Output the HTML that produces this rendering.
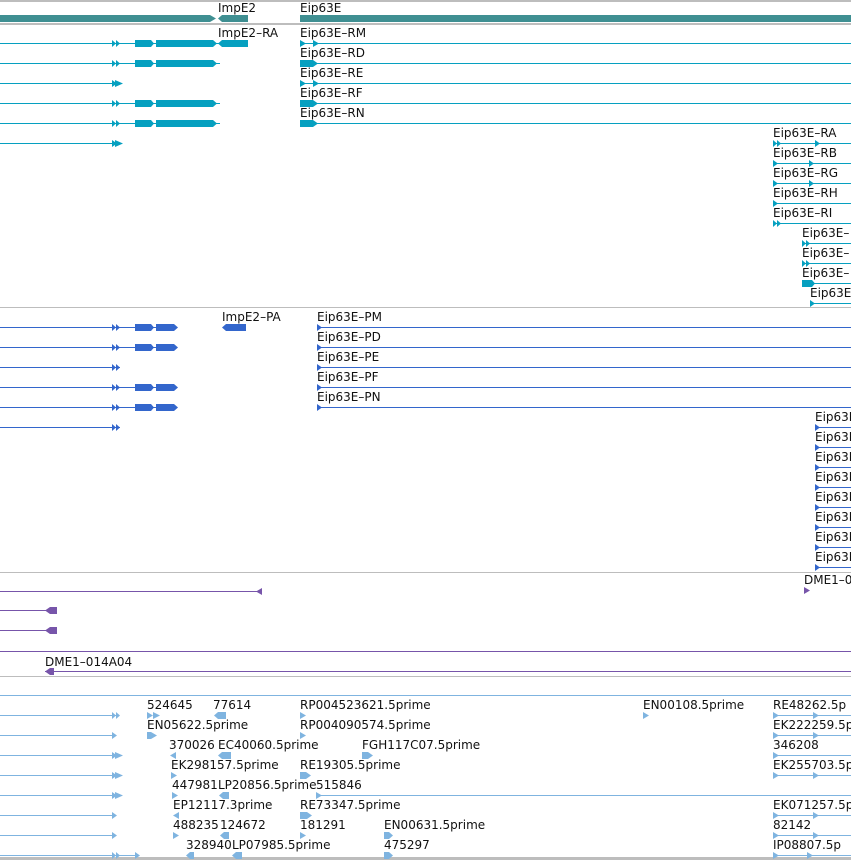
<!DOCTYPE html>
<html><head><meta charset="utf-8"><style>
html,body{margin:0;padding:0;background:#fff;width:851px;height:860px;overflow:hidden}
svg{display:block}
text{font-family:"DejaVu Sans","Liberation Sans",sans-serif;font-size:12px;fill:#111}
</style></head><body>
<svg width="851" height="860" xmlns="http://www.w3.org/2000/svg">
<g fill="#bdbdbd">
<rect x="0" y="0" width="851" height="2"/>
<rect x="0" y="23" width="851" height="2"/>
<rect x="0" y="307" width="851" height="1"/>
<rect x="0" y="572" width="851" height="1"/>
<rect x="0" y="676" width="851" height="1"/>
<rect x="0" y="857" width="851" height="3"/>
</g>
<g fill="#3f8f92">
<polygon points="0,15 210,15 216,18.5 210,22 0,22"/>
<polygon points="222,15 248,15 248,22 222,22 218,18.5"/>
<rect x="300" y="15" width="551" height="7"/>
</g>
<text x="218" y="12">ImpE2</text><text x="300" y="12">Eip63E</text>

<g fill="#06a0c0" stroke="none">
<rect x="0" y="43" width="120" height="1"/><rect x="0" y="63" width="120" height="1"/><rect x="0" y="83" width="120" height="1"/><rect x="0" y="103" width="120" height="1"/><rect x="0" y="123" width="120" height="1"/><rect x="0" y="143" width="120" height="1"/>
<rect x="120" y="43" width="100" height="1"/><rect x="120" y="63" width="100" height="1"/><rect x="120" y="103" width="100" height="1"/><rect x="120" y="123" width="100" height="1"/>
<g id="ar"><polygon points="112,40 116,43.5 112,47"/><polygon points="116,40 120,43.5 116,47"/></g>
<use href="#ar" y="20"/><use href="#ar" y="60"/><use href="#ar" y="80"/>
<polygon points="112,80 117,83.5 112,87"/><polygon points="115,80 123,83.5 115,87"/>
<polygon points="112,140 117,143.5 112,147"/><polygon points="115,140 123,143.5 115,147"/>
<g id="ex"><polygon points="135,40 151,40 154,43.5 151,47 135,47"/><polygon points="156,40 213,40 217,43.5 213,47 156,47"/></g>
<use href="#ex" y="20"/><use href="#ex" y="60"/><use href="#ex" y="80"/>
<polygon points="222,40 248,40 248,47 222,47 218,43.5"/>
<rect x="300" y="43" width="551" height="1"/><rect x="300" y="63" width="551" height="1"/><rect x="300" y="83" width="551" height="1"/><rect x="300" y="103" width="551" height="1"/><rect x="300" y="123" width="551" height="1"/>
<polygon points="300,40 306,43.5 300,47"/><polygon points="313,40 319,43.5 313,47"/>
<polygon points="300,60 313,60 318,63.5 313,67 300,67"/>
<polygon points="300,80 306,83.5 300,87"/><polygon points="313,80 319,83.5 313,87"/>
<polygon points="300,100 313,100 318,103.5 313,107 300,107"/>
<polygon points="300,120 313,120 318,123.5 313,127 300,127"/>
<rect x="773" y="143" width="78" height="1"/><rect x="773" y="163" width="78" height="1"/><rect x="773" y="183" width="78" height="1"/><rect x="773" y="203" width="78" height="1"/><rect x="773" y="223" width="78" height="1"/>
<polygon points="773,140 777,143.5 773,147"/><polygon points="777,140 781,143.5 777,147"/><polygon points="815,140 820,143.5 815,147"/>
<polygon points="773,160 778,163.5 773,167"/><polygon points="809,160 814,163.5 809,167"/>
<polygon points="773,180 778,183.5 773,187"/><polygon points="809,180 814,183.5 809,187"/>
<polygon points="773,200 778,203.5 773,207"/>
<polygon points="773,220 777,223.5 773,227"/><polygon points="777,220 781,223.5 777,227"/>
<rect x="802" y="243" width="49" height="1"/><rect x="802" y="263" width="49" height="1"/><rect x="802" y="283" width="49" height="1"/><rect x="810" y="303" width="41" height="1"/>
<polygon points="802,240 806,243.5 802,247"/><polygon points="806,240 810,243.5 806,247"/>
<polygon points="802,260 806,263.5 802,267"/><polygon points="806,260 810,263.5 806,267"/>
<polygon points="802,280 812,280 815,283.5 812,287 802,287"/>
<polygon points="810,300 815,303.5 810,307"/>
</g>
<text x="218" y="37">ImpE2–RA</text>
<text x="300" y="37">Eip63E–RM</text><text x="300" y="57">Eip63E–RD</text><text x="300" y="77">Eip63E–RE</text><text x="300" y="97">Eip63E–RF</text><text x="300" y="117">Eip63E–RN</text>
<text x="773" y="137">Eip63E–RA</text><text x="773" y="157">Eip63E–RB</text><text x="773" y="177">Eip63E–RG</text><text x="773" y="197">Eip63E–RH</text><text x="773" y="217">Eip63E–RI</text>
<text x="802" y="237">Eip63E–</text><text x="802" y="257">Eip63E–</text><text x="802" y="277">Eip63E–</text><text x="810" y="297">Eip63E</text>

<g fill="#3366cc">
<rect x="0" y="327" width="120" height="1"/><rect x="0" y="347" width="120" height="1"/><rect x="0" y="367" width="120" height="1"/><rect x="0" y="387" width="120" height="1"/><rect x="0" y="407" width="120" height="1"/><rect x="0" y="427" width="120" height="1"/>
<rect x="120" y="327" width="55" height="1"/><rect x="120" y="347" width="55" height="1"/><rect x="120" y="387" width="55" height="1"/><rect x="120" y="407" width="55" height="1"/>
<g id="pa"><polygon points="112,324 116,327.5 112,331"/><polygon points="116,324 120,327.5 116,331"/></g>
<use href="#pa" y="20"/><use href="#pa" y="40"/><use href="#pa" y="60"/><use href="#pa" y="80"/><use href="#pa" y="100"/>
<g id="pe"><polygon points="135,324 151,324 154,327.5 151,331 135,331"/><polygon points="156,324 174,324 178,327.5 174,331 156,331"/></g>
<use href="#pe" y="20"/><use href="#pe" y="60"/><use href="#pe" y="80"/>
<polygon points="226,324 246,324 246,331 226,331 222,327.5"/>
<rect x="317" y="327" width="534" height="1"/><rect x="317" y="347" width="534" height="1"/><rect x="317" y="367" width="534" height="1"/><rect x="317" y="387" width="534" height="1"/><rect x="317" y="407" width="534" height="1"/>
<polygon points="317,324 322,327.5 317,331"/><polygon points="317,344 322,347.5 317,351"/><polygon points="317,364 322,367.5 317,371"/><polygon points="317,384 322,387.5 317,391"/><polygon points="317,404 322,407.5 317,411"/>
<g id="pr"><rect x="815" y="427" width="36" height="1"/><polygon points="815,424 820,427.5 815,431"/></g>
<use href="#pr" y="20"/><use href="#pr" y="40"/><use href="#pr" y="60"/><use href="#pr" y="80"/><use href="#pr" y="100"/><use href="#pr" y="120"/><use href="#pr" y="140"/>
</g>
<text x="222" y="321">ImpE2–PA</text>
<text x="317" y="321">Eip63E–PM</text><text x="317" y="341">Eip63E–PD</text><text x="317" y="361">Eip63E–PE</text><text x="317" y="381">Eip63E–PF</text><text x="317" y="401">Eip63E–PN</text>
<text x="815" y="421">Eip63E</text><text x="815" y="441">Eip63E</text><text x="815" y="461">Eip63E</text><text x="815" y="481">Eip63E</text><text x="815" y="501">Eip63E</text><text x="815" y="521">Eip63E</text><text x="815" y="541">Eip63E</text><text x="815" y="561">Eip63E</text>

<g fill="#7755aa">
<rect x="0" y="591" width="260" height="1"/><polygon points="256,591.5 262,588 262,595"/>
<rect x="0" y="610" width="50" height="1"/><polygon points="45,610.5 50,607 57,607 57,614 50,614"/>
<rect x="0" y="630" width="50" height="1"/><polygon points="45,630.5 50,627 57,627 57,634 50,634"/>
<rect x="0" y="651" width="851" height="1"/>
<rect x="45" y="671" width="806" height="1"/><polygon points="45,671.5 50,668 54,668 54,675 50,675"/>
<polygon points="804,587 810,590.5 804,594"/>
</g>
<text x="804" y="584">DME1–0</text>
<text x="45" y="666">DME1–014A04</text>

<g fill="#7fb4e0">
<rect x="0" y="695" width="851" height="1"/>
<rect x="0" y="715" width="116" height="1"/><rect x="0" y="735" width="116" height="1"/><rect x="0" y="755" width="116" height="1"/><rect x="0" y="775" width="116" height="1"/><rect x="0" y="795" width="116" height="1"/><rect x="0" y="815" width="116" height="1"/><rect x="0" y="835" width="116" height="1"/><rect x="0" y="855" width="136" height="1"/>
<polygon points="112,712 116,715.5 112,719"/><polygon points="116,712 120,715.5 116,719"/>
<polygon points="112,732 117,735.5 112,739"/>
<polygon points="112,752 117,755.5 112,759"/><polygon points="115,752 123,755.5 115,759"/>
<polygon points="112,772 117,775.5 112,779"/><polygon points="115,772 123,775.5 115,779"/>
<polygon points="112,792 117,795.5 112,799"/><polygon points="115,792 123,795.5 115,799"/>
<polygon points="112,812 117,815.5 112,819"/>
<polygon points="112,832 117,835.5 112,839"/>
<polygon points="112,852 116,855.5 112,859"/><polygon points="116,852 120,855.5 116,859"/><polygon points="135,852 140,855.5 135,859"/>
<polygon points="147,712 153,715.5 147,719"/><polygon points="153,712 160,715.5 153,719"/>
<polygon points="214,715.5 218,712 226,712 226,719 218,719"/>
<polygon points="300,712 306,715.5 300,719"/>
<polygon points="643,712 649,715.5 643,719"/>
<rect x="773" y="715" width="78" height="1"/><polygon points="773,712 779,715.5 773,719"/><polygon points="813,712 819,715.5 813,719"/>
<polygon points="147,732 151,732 157,735.5 151,739 147,739"/>
<polygon points="300,732 306,735.5 300,739"/>
<rect x="773" y="735" width="78" height="1"/><polygon points="773,732 779,735.5 773,739"/><polygon points="813,732 819,735.5 813,739"/>
<polygon points="170,755.5 176,752 176,759"/>
<polygon points="218,755.5 222,752 231,752 231,759 222,759"/>
<polygon points="362,752 368,752 373,755.5 368,759 362,759"/>
<rect x="773" y="755" width="78" height="1"/><polygon points="773,752 779,755.5 773,759"/>
<polygon points="171,772 177,775.5 171,779"/>
<polygon points="300,772 306,772 311,775.5 306,779 300,779"/>
<rect x="773" y="775" width="78" height="1"/><polygon points="773,772 779,775.5 773,779"/><polygon points="813,772 819,775.5 813,779"/>
<polygon points="172,792 178,795.5 172,799"/>
<polygon points="219,795.5 223,792 229,792 229,799 223,799"/>
<rect x="316" y="795" width="535" height="1"/><polygon points="316,792 322,795.5 316,799"/>
<polygon points="173,815.5 179,812 179,819"/>
<polygon points="300,812 307,812 312,815.5 307,819 300,819"/>
<rect x="773" y="815" width="78" height="1"/><polygon points="773,812 779,815.5 773,819"/><polygon points="813,812 819,815.5 813,819"/>
<polygon points="173,832 179,835.5 173,839"/>
<polygon points="220,835.5 224,832 229,832 229,839 224,839"/>
<polygon points="300,832 306,835.5 300,839"/>
<polygon points="384,832 389,832 393,835.5 389,839 384,839"/>
<rect x="773" y="835" width="78" height="1"/><polygon points="773,832 779,835.5 773,839"/><polygon points="813,832 819,835.5 813,839"/>
<polygon points="186,855.5 190,852 194,852 194,859 190,859"/>
<polygon points="232,855.5 236,852 242,852 242,859 236,859"/>
<polygon points="384,852 389,852 393,855.5 389,859 384,859"/>
<rect x="773" y="855" width="78" height="1"/><polygon points="773,852 779,855.5 773,859"/><polygon points="807,852 813,855.5 807,859"/>
</g>
<text x="147" y="709">524645</text><text x="213" y="709">77614</text><text x="300" y="709">RP004523621.5prime</text><text x="643" y="709">EN00108.5prime</text><text x="773" y="709">RE48262.5p</text>
<text x="147" y="729">EN05622.5prime</text><text x="300" y="729">RP004090574.5prime</text><text x="773" y="729">EK222259.5p</text>
<text x="169" y="749">370026</text><text x="218" y="749">EC40060.5prime</text><text x="362" y="749">FGH117C07.5prime</text><text x="773" y="749">346208</text>
<text x="171" y="769">EK298157.5prime</text><text x="300" y="769">RE19305.5prime</text><text x="773" y="769">EK255703.5p</text>
<text x="172" y="789">447981</text><text x="218" y="789">LP20856.5prime</text><text x="316" y="789">515846</text>
<text x="173" y="809">EP12117.3prime</text><text x="300" y="809">RE73347.5prime</text><text x="773" y="809">EK071257.5p</text>
<text x="173" y="829">488235</text><text x="220" y="829">124672</text><text x="300" y="829">181291</text><text x="384" y="829">EN00631.5prime</text><text x="773" y="829">82142</text>
<text x="186" y="849">328940</text><text x="232" y="849">LP07985.5prime</text><text x="384" y="849">475297</text><text x="773" y="849">IP08807.5p</text>
</svg>
</body></html>
